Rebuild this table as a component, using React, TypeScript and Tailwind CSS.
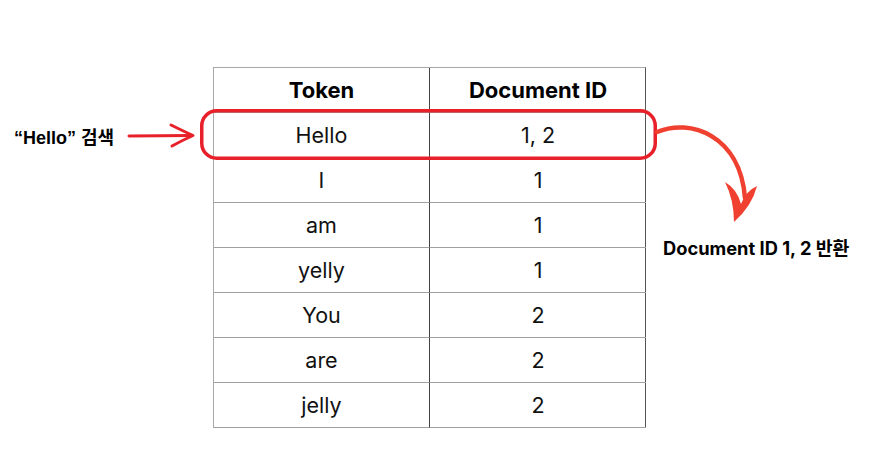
import React from "react";

const rows: [string, string][] = [
  ["Hello", "1, 2"],
  ["I", "1"],
  ["am", "1"],
  ["yelly", "1"],
  ["You", "2"],
  ["are", "2"],
  ["jelly", "2"],
];

export default function App() {
  return (
    <div
      className="relative w-[880px] h-[468px] bg-white overflow-hidden"
      style={{ fontFamily: "Inter, 'Noto Sans CJK KR', sans-serif" }}
    >
      <div className="pt-[67px] pl-[213px]">
        <div className="grid grid-cols-[216px_216px] w-[433px] border-l border-t border-[#a8a8a8] border-r border-r-[#555]">
          <div className="h-[45px] flex items-center justify-center border-b border-[#a0a0a0] border-r border-r-[#444] text-[22px] font-bold text-black">
            Token
          </div>
          <div className="h-[45px] flex items-center justify-center border-b border-[#a0a0a0] text-[22px] font-bold text-black">
            Document ID
          </div>
          {rows.map(([t, d], i) => (
            <React.Fragment key={i}>
              <div className="h-[45px] flex items-center justify-center border-b border-[#a0a0a0] border-r border-r-[#444] text-[21.5px] text-[#111]">
                {t}
              </div>
              <div className="h-[45px] flex items-center justify-center border-b border-[#a0a0a0] text-[21.5px] text-[#111]">
                {d}
              </div>
            </React.Fragment>
          ))}
        </div>
      </div>

      <svg
        className="absolute inset-0 pointer-events-none"
        width="880"
        height="468"
        viewBox="0 0 880 468"
      >
        <rect
          x="201.75"
          y="110.75"
          width="453.5"
          height="47.5"
          rx="15"
          fill="none"
          stroke="#e8202a"
          strokeWidth="3.5"
        />
        <path
          d="M129 136 L191 135.5"
          stroke="#e8202a"
          strokeWidth="3"
          strokeLinecap="round"
          fill="none"
        />
        <path
          d="M171 125 Q183 131 193 135.5 Q183 140 172 146"
          stroke="#e8202a"
          strokeWidth="3"
          strokeLinecap="round"
          strokeLinejoin="round"
          fill="none"
        />
        <path
          d="M657 132 C690 118 740 135 745 198"
          stroke="#f0402f"
          strokeWidth="4.5"
          strokeLinecap="round"
          fill="none"
        />
        <path
          d="M725 182 Q737 189 741 204 Q746 191 757 186 Q752 206 734 222 Q734 200 725 182 Z"
          fill="#f0402f"
        />
      </svg>

      <div
        className="absolute left-[14px] top-[126px] text-[18px] font-bold text-black leading-[24px] whitespace-nowrap"
        style={{ fontFamily: "'Liberation Sans', 'Noto Sans CJK KR', sans-serif" }}
      >
        “Hello” 검색
      </div>
      <div className="absolute left-[663px] top-[235px] text-[18.3px] font-bold text-black leading-[26px] whitespace-nowrap">
        Document ID 1, 2 반환
      </div>
    </div>
  );
}
